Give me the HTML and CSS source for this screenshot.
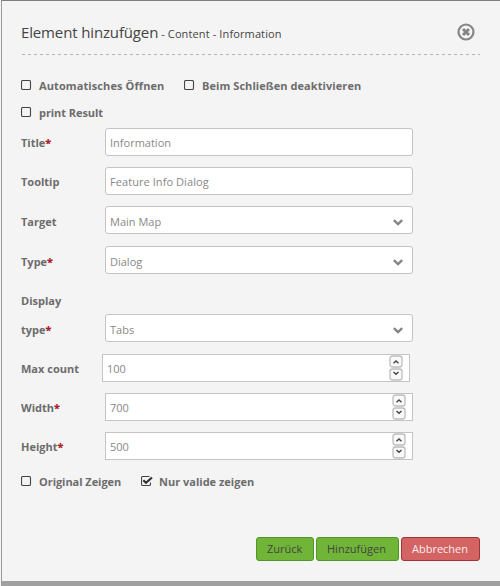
FILE: index.html
```
<!DOCTYPE html>
<html lang="de">
<head>
<meta charset="utf-8">
<title>Element hinzufügen</title>
<link rel="stylesheet" href="styles.css">
</head>
<body>
<svg width="0" height="0" class="defs">
  <symbol id="chev" viewBox="0 0 10 7"><path d="M.8 1.2 5 5.200 9.200 1.2" fill="none" stroke="#858585" stroke-width="2.4"/></symbol>
  <symbol id="box" viewBox="0 0 12 12"><rect x="0.5" y="0.5" width="9" height="9" rx="1.3" fill="none" stroke="#444" stroke-width="1.1"/></symbol>
  <symbol id="checked" viewBox="0 0 12 12"><path d="M9.5 6.5v1.7q0 1.3-1.3 1.3H1.8Q.5 9.500.5 8.200V1.800Q.5.500 1.800.500H8.500" fill="none" stroke="#444" stroke-width="1.1"/><path d="M2.300 4.200 5 6.800 11 1.500" fill="none" stroke="#333" stroke-width="2.200"/></symbol>
  <symbol id="spin" viewBox="0 0 14 26"><rect x="1" y="1" width="12" height="11" rx="2.5" fill="#f9f9f9" stroke="#bdbdbd" stroke-width="1.300"/><rect x="1" y="14" width="12" height="11" rx="2.500" fill="#f9f9f9" stroke="#bdbdbd" stroke-width="1.300"/><path d="M4.500 8.300 7 6l2.500 2.300M4.500 17 7 19.300 9.500 17" fill="none" stroke="#444" stroke-width="1.400"/></symbol>
</svg>
<div class="popup">
  <header class="head">
    <h1>Element hinzufügen<small> - Content - Information</small></h1>
    <svg class="close" viewBox="0 0 18 18"><circle cx="9" cy="9" r="7.500" fill="none" stroke="#858585" stroke-width="2.200"/><path d="M6 6l6 6M12 6l-6 6" stroke="#858585" stroke-width="2.900"/></svg>
  </header>
  <form class="form">
    <div class="checks top">
      <label class="check first"><svg><use href="#box"/></svg>Automatisches Öffnen</label>
      <label class="check deactivate"><svg><use href="#box"/></svg>Beim Schließen deaktivieren</label>
    </div>
    <div class="checks second"><label class="check print"><svg><use href="#box"/></svg>print Result</label></div>
    <div class="row"><label>Title<b>*</b></label><div class="field">Information</div></div>
    <div class="row"><label>Tooltip</label><div class="field wide">Feature Info Dialog</div></div>
    <div class="row select loose"><label>Target</label><div class="field">Main Map<svg class="chev"><use href="#chev"/></svg></div></div>
    <div class="row select"><label>Type<b>*</b></label><div class="field">Dialog<svg class="chev"><use href="#chev"/></svg></div></div>
    <div class="row select tall"><label>Display<br>type<b>*</b></label><div class="field">Tabs<svg class="chev"><use href="#chev"/></svg></div></div>
    <div class="row narrow"><label>Max count</label><div class="field number">100<svg class="spin"><use href="#spin"/></svg></div></div>
    <div class="row"><label>Width<b>*</b></label><div class="field number">700<svg class="spin"><use href="#spin"/></svg></div></div>
    <div class="row"><label>Height<b>*</b></label><div class="field number">500<svg class="spin"><use href="#spin"/></svg></div></div>
    <div class="checks last">
      <label class="check original"><svg><use href="#box"/></svg>Original Zeigen</label>
      <label class="check"><svg><use href="#checked"/></svg>Nur valide zeigen</label>
    </div>
  </form>
  <footer class="buttons">
    <div class="btn back">Zurück</div>
    <div class="btn add">Hinzufügen</div>
    <div class="btn cancel">Abbrechen</div>
  </footer>
</div>
</body>
</html>
```
FILE: styles.css
```
* { box-sizing: border-box; }
body { margin: 0; background: #f4f4f4; font: 11px/16px "Open Sans", sans-serif; color: #6c6c6c; overflow: hidden; }
.defs { position: absolute; }
.popup { height: 586px; margin-left: 1px; padding: 0 20px 0 19px; border-top: 1px solid #7f7f7f; border-left: 1px solid #9a9a9a; border-bottom: 5px solid #a0a0a0; background: #f4f4f4; display: flex; flex-direction: column; }
.head { height: 54px; width: 459px; flex: none; padding: 20px 5px 0 0; display: flex; justify-content: space-between; background: repeating-linear-gradient(90deg, #b4b4b4 0 3px, transparent 3px 6px) 1px 100% / 100% 1px no-repeat; }
h1 { margin: 0; font-size: 15px; line-height: 22px; font-weight: 400; color: #444; letter-spacing: -0.14px; }
h1 small { font-size: 11px; letter-spacing: 0.12px; }
.close { width: 18px; height: 18px; margin-top: 2px; }
.form { font-weight: 700; }
.checks { display: flex; height: 16px; }
.top { margin-top: 23px; }
.second { margin: 11px 0 7px; }
.last { margin-top: 14px; }
.check { display: flex; }
.check svg { width: 12px; height: 12px; margin: 2px 6px 0 0; }
.first { width: 163px; letter-spacing: 0.1px; }
.deactivate { letter-spacing: 0.07px; }
.print { letter-spacing: -0.07px; }
.original { width: 120px; letter-spacing: -0.05px; }
.row { display: flex; height: 28px; margin-bottom: 11px; line-height: 30px; }
.row label { width: 84px; flex: none; }
.narrow label { width: 81px; }
.select label { padding-top: 1px; }
.row b { color: #b01e28; }
.loose { margin-bottom: 12px; }
.tall { height: 57px; align-items: flex-end; margin: 11px 0 12px; }
.tall label { line-height: 29px; margin-bottom: -2px; }
.field { display: flex; justify-content: space-between; width: 308px; height: 28px; padding: 1px 4px; border: 1px solid #c4c4c4; border-radius: 3px; background: #fff; color: #888; font-weight: 400; line-height: 26px; }
.wide { letter-spacing: 0.07px; }
.select .field { line-height: 28px; }
.number { border-radius: 0; }
.chev { width: 10px; height: 7px; margin: 11px 5px 0 0; }
.spin { width: 14px; height: 26px; margin: -1px 2px 0 0; }
.buttons { display: flex; gap: 2px; margin: auto 0 20px 235px; }
.btn { height: 24px; border: 1px solid #529427; border-radius: 3px; background: #70b537; color: #444; line-height: 22px; padding-left: 10px; }
.back { width: 58px; }
.add { width: 83px; }
.cancel { width: 79px; background: #d46464; border-color: #a23434; color: #f6eeee; }
```
